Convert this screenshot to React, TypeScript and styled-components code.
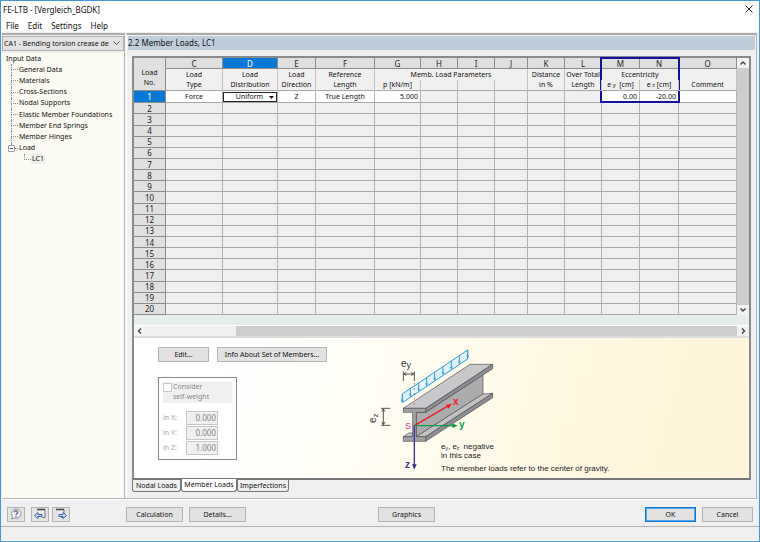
import React from 'react';
import styled, { createGlobalStyle } from 'styled-components';

const Global = createGlobalStyle`
  *, *::before, *::after { box-sizing: border-box; }
  body { margin: 0; background: #f0f0f0; }
  button, input, select { font: inherit; color: inherit; margin: 0; }
`;

const Window = styled.div`
  min-height: 100vh;
  display: flex;
  flex-direction: column;
  border: 1px solid #4597dc;
  background: #f0f0f0;
  color: #111;
  font-family: "Noto Sans", sans-serif;
  font-size: 7px;
  line-height: 11px;
`;

const TitleBar = styled.header`
  display: flex;
  justify-content: space-between;
  align-items: center;
  height: 16px;
  padding: 0 4px 0 2px;
  background: #fff;
  font-size: 8px;
`;

const CloseButton = styled.button`
  display: flex;
  align-items: center;
  padding: 2px;
  border: 0;
  background: none;
`;

const MenuBar = styled.nav`
  display: flex;
  gap: 9px;
  height: 15px;
  padding: 1px 5px 0;
  background: #fff;
  font-size: 8px;
`;

const MenuItem = styled.button`
  padding: 0;
  border: 0;
  background: none;
`;

const Main = styled.main`
  flex: 1;
  display: flex;
  gap: 1px;
  margin: 1px 2px 0 1px;
  border-bottom: 1px solid #b4b4b4;
`;

const Sidebar = styled.aside`
  display: flex;
  flex-direction: column;
  flex: 0 0 123px;
  border-top: 2px solid #a9a9a9;
  border-right: 1px solid #b4b4b4;
  background: #fcfbf3;
`;

const CaseSelectBox = styled.div`
  position: relative;
  height: 18px;
  padding: 1px 0 2px;
  background: #f0f0f0;
`;

const CaseSelect = styled.select`
  display: block;
  width: 100%;
  height: 15px;
  padding: 0 14px 0 1px;
  border: 1px solid #b0b0b0;
  border-radius: 0;
  background: #e3e3e3;
  appearance: none;
  text-overflow: clip;
`;

const CaseArrow = styled.svg`
  position: absolute;
  right: 4px;
  top: 6px;
  pointer-events: none;
`;

const Tree = styled.ul`
  display: grid;
  grid-auto-rows: 1fr;
  height: 112px;
  margin: 0;
  padding: 0;
  list-style: none;
`;

const TreeItem = styled.li<{ $level: number; $last?: boolean }>`
  position: relative;
  display: flex;
  align-items: center;
  padding-left: ${p => [3, 16, 29][p.$level]}px;

  &::before {
    content: "";
    display: ${p => (p.$level ? 'block' : 'none')};
    position: absolute;
    left: ${p => (p.$level === 2 ? 22 : 9)}px;
    top: 0;
    width: 7px;
    height: 6px;
    border-left: 1px dotted #8a8a8a;
    border-bottom: 1px dotted #8a8a8a;
  }
  &::after {
    content: "";
    display: ${p => (p.$level === 1 && !p.$last ? 'block' : 'none')};
    position: absolute;
    left: 9px;
    top: 6px;
    bottom: 0;
    border-left: 1px dotted #8a8a8a;
  }
`;

const TreeLabel = styled.button<{ $selected?: boolean }>`
  padding: 0 1px;
  border: 0;
  line-height: 10px;
  background: ${p => (p.$selected ? '#efefec' : 'none')};
`;

const Expander = styled.button`
  position: absolute;
  z-index: 1;
  left: 6px;
  top: 2px;
  width: 7px;
  height: 7px;
  padding: 0;
  border: 1px solid #9a9a9a;
  border-radius: 1px;
  background: linear-gradient(#4a5f9c, #4a5f9c) center / 3px 1px no-repeat #fff;
`;

const Content = styled.section`
  flex: 1;
  min-width: 0;
  display: flex;
  flex-direction: column;
  border-top: 2px solid #a9a9a9;
  border-right: 1px solid #b4b4b4;
  border-left: 1px solid #fff;
  padding: 1px 1px 6px;
`;

const Heading = styled.h1`
  margin: 0 0 6px;
  padding: 0;
  height: 14px;
  background: #bfcddb;
  font-size: 8px;
  line-height: 13px;
  font-weight: 400;
`;

const Frame = styled.div`
  flex: 1;
  display: flex;
  flex-direction: column;
  margin: 0 4px;
  border: 2px solid #8a8a8a;
  border-bottom: 2px solid #777;
`;

const GridArea = styled.div`
  display: flex;
  background: #f0f0f0;
`;

const Sheet = styled.table`
  flex: 1;
  min-width: 0;
  height: 257px;
  table-layout: fixed;
  border-collapse: separate;
  border-spacing: 0;
  line-height: 10px;
`;

const Col = styled.col<{ $w?: number }>`
  width: ${p => (p.$w ? p.$w + 'px' : 'auto')};
`;

const Letter = styled.th<{ $active?: boolean }>`
  height: 11px;
  padding: 0;
  border-right: 1px solid #8c8c8c;
  border-bottom: 1px solid #8c8c8c;
  background: ${p => (p.$active ? '#0a78d7' : '#dfdfdf')};
  color: ${p => (p.$active ? '#fff' : '#222')};
  font-size: 8px;
  font-weight: 400;
  line-height: 9px;
`;

const Head = styled.th<{ $open?: boolean; $end?: boolean }>`
  position: relative;
  height: 11px;
  padding: 0;
  border-right: 1px solid ${p => (p.$open ? 'transparent' : '#c4c4c4')};
  border-bottom: ${p => (p.$end ? '1px solid #a8a8a8' : '0')};
  font-weight: 400;
  white-space: nowrap;
`;

const Corner = styled.th`
  padding: 8px 0 0;
  border-right: 1px solid #8c8c8c;
  border-bottom: 1px solid #8c8c8c;
  background: #e0e0e0;
  font-weight: 400;
`;

const Highlight = styled.span`
  position: absolute;
  top: -12px;
  right: -2px;
  bottom: -23px;
  left: -2px;
  border: 2px solid #12129c;
  pointer-events: none;
`;

const RowNumber = styled.th<{ $active?: boolean }>`
  padding: 0;
  border-right: 1px solid #8c8c8c;
  border-bottom: 1px solid #8c8c8c;
  background: ${p => (p.$active ? '#0a78d7' : '#e0e0e0')};
  color: ${p => (p.$active ? '#fff' : '#222')};
  font-size: 8px;
  font-weight: 400;
  line-height: 9px;
`;

const Cell = styled.td<{ $filled?: boolean; $right?: boolean }>`
  padding: ${p => (p.$right ? '0 2px' : '0')};
  border-right: 1px solid #b4b4b4;
  border-bottom: 1px solid #a8a8a8;
  background: ${p => (p.$filled ? '#fff' : 'transparent')};
  text-align: ${p => (p.$right ? 'right' : 'center')};
  white-space: nowrap;
  line-height: 9px;
`;

const CellEditor = styled.div`
  position: relative;
  height: 10px;
`;

const CellSelect = styled.select`
  display: block;
  width: 100%;
  height: 10px;
  padding: 0 9px 0 8px;
  border: 1px solid #222;
  border-radius: 0;
  background: #fff;
  appearance: none;
  text-align: center;
  line-height: 8px;
`;

const CellArrow = styled.svg`
  position: absolute;
  right: 3px;
  top: 4px;
  pointer-events: none;
`;

const VScroll = styled.div`
  display: flex;
  flex-direction: column;
  width: 12px;
  background: #f0f0f0;
`;

const HScroll = styled.div`
  display: flex;
  height: 13px;
  border-top: 1px solid #fff;
  border-bottom: 2px solid #dcdcdc;
  background: #f0f0f0;
`;

const ScrollButton = styled.button`
  flex: none;
  display: flex;
  align-items: center;
  justify-content: center;
  width: 12px;
  height: 10px;
  padding: 0;
  border: 0;
  background: #f2f2f2;
`;

const Thumb = styled.div`
  flex: 1;
  background: #cdcdcd;
`;

const Track = styled.div`
  flex: 0 1 90px;
`;

const Strip = styled.div`
  height: 10px;
  background: #e7eded;
`;

const Details = styled.div`
  flex: 1;
  display: flex;
  gap: 38px;
  padding: 8px 0 0 24px;
  background: linear-gradient(105deg, #fff 15%, #fffdf3 42%, #fff8e3 68%, #fef5dc 85%, #fef4d9);
`;

const Controls = styled.div`
  flex: none;
  padding-top: 1px;
`;

const ButtonRow = styled.div`
  display: flex;
  gap: 8px;
`;

const Button = styled.button<{ $w: number; $primary?: boolean }>`
  display: flex;
  align-items: center;
  justify-content: center;
  width: ${p => p.$w}px;
  height: 15px;
  padding: 0;
  border: ${p => (p.$primary ? '1px solid #0a78d7' : '1px solid #b4b4b4')};
  outline: ${p => (p.$primary ? '1px solid #5aa5e4' : 'none')};
  outline-offset: -2px;
  background: #e2e2e2;
  white-space: nowrap;
`;

const WeightBox = styled.fieldset`
  width: 79px;
  min-width: 0;
  height: 83px;
  margin: 15px 0 0;
  padding: 4px;
  border: 1px solid #8a8a8a;
  background: #fff;
  color: #858585;
`;

const WeightCheck = styled.label`
  display: flex;
  gap: 1px;
  height: 21px;
  margin-bottom: 7px;
  background: #f0f0f0;
  line-height: 10px;
`;

const CheckInput = styled.input`
  flex: none;
  width: 9px;
  height: 9px;
  margin: 1px 0 0;
  appearance: none;
  border: 1px solid #c8c8c8;
  background: #fff;
`;

const Axis = styled.label`
  display: flex;
  align-items: center;
  height: 15px;
`;

const AxisName = styled.span`
  width: 23px;
  color: #a8a8a8;
`;

const AxisInput = styled.input`
  width: 32px;
  height: 14px;
  padding: 0 1px;
  border: 1px solid #c6c6c6;
  background: #f0f0f0;
  text-align: right;
  font-size: 8px;
`;

const Drawing = styled.svg`
  flex: none;
  display: block;
  font-family: "Liberation Sans", sans-serif;
`;

const Tabs = styled.div`
  display: flex;
  margin: -1px 4px 0;
  height: 13px;
`;

const Tab = styled.button<{ $active?: boolean; $w: number }>`
  width: ${p => p.$w}px;
  height: ${p => (p.$active ? 13 : 12)}px;
  margin-top: ${p => (p.$active ? 0 : 1)}px;
  padding: 0;
  border: 1px solid #777;
  border-top: 0;
  border-radius: 0 0 3px 3px;
  background: ${p => (p.$active ? '#fff' : '#f0f0f0')};
  white-space: nowrap;
  line-height: 10px;
`;

const Footer = styled.footer`
  display: flex;
  align-items: center;
  height: 28px;
  padding: 2px 6px 0;
  border-top: 1px solid #fff;
  border-bottom: 1px solid #b4b4b4;
`;

const IconGroup = styled.div`
  display: flex;
  flex: 0 0 119px;
  gap: 3px;
`;

const IconButton = styled.button<{ $spaced?: boolean }>`
  display: flex;
  align-items: center;
  justify-content: center;
  width: 18px;
  height: 15px;
  margin-right: ${p => (p.$spaced ? 3 : 0)}px;
  padding: 0;
  border: 1px solid #b4b4b4;
  background: #e4e4e4;
`;

const Actions = styled.div<{ $end?: boolean }>`
  display: flex;
  flex: ${p => (p.$end ? '0 0 auto' : '17 1 0')};
  gap: 6px;
`;

const Graphics = styled.div`
  flex: 18 1 0;
`;

const StatusBar = styled.div`
  height: 14px;
  border-bottom: 1px solid #fff;
`;

const columns: { id: string; w?: number; top?: string; bottom: React.ReactNode; value?: string; right?: boolean }[] = [
  { id: 'C', w: 57, top: 'Load', bottom: 'Type', value: 'Force' },
  { id: 'D', w: 55, top: 'Load', bottom: 'Distribution', value: 'Uniform' },
  { id: 'E', w: 38, top: 'Load', bottom: 'Direction', value: 'Z' },
  { id: 'F', w: 59, top: 'Reference', bottom: 'Length', value: 'True Length' },
  { id: 'G', w: 46, bottom: 'p [kN/m]', value: '5.000', right: true },
  { id: 'H', w: 37, bottom: '' },
  { id: 'I', w: 37, bottom: '' },
  { id: 'J', w: 33, bottom: '' },
  { id: 'K', w: 37, top: 'Distance', bottom: 'in %' },
  { id: 'L', w: 37, top: 'Over Total', bottom: 'Length' },
  { id: 'M', w: 38, bottom: <>e<small> y</small>&nbsp; [cm]</>, value: '0.00', right: true },
  { id: 'N', w: 39, bottom: <>e<small> z</small> [cm]</>, value: '-20.00', right: true },
  { id: 'O', top: '', bottom: 'Comment', value: ' ' },
];

const treeItems = ['General Data', 'Materials', 'Cross-Sections', 'Nodal Supports', 'Elastic Member Foundations', 'Member End Springs', 'Member Hinges'];

const Chevron = ({ d }: { d: string }) => (
  <svg width="8" height="8" viewBox="0 0 8 8" fill="none" stroke="#444" strokeWidth="1.4"><path d={d} /></svg>
);

function LoadSheet() {
  return (
    <Sheet>
      <colgroup>
        <Col $w={32} />
        {columns.map(c => <Col key={c.id} $w={c.w} />)}
      </colgroup>
      <thead>
        <tr>
          <Corner rowSpan={3}>Load<br />No.</Corner>
          {columns.map(c => <Letter key={c.id} $active={c.id === 'D'}>{c.id}</Letter>)}
        </tr>
        <tr>
          {columns.slice(0, 4).map(c => <Head key={c.id}>{c.top}</Head>)}
          <Head colSpan={4}>Memb. Load Parameters</Head>
          {columns.slice(8, 10).map(c => <Head key={c.id} $open={c.id === 'L'}>{c.top}</Head>)}
          <Head colSpan={2}>Eccentricity<Highlight /></Head>
          <Head />
        </tr>
        <tr>
          {columns.map(c => <Head key={c.id} $end>{c.bottom}</Head>)}
        </tr>
      </thead>
      <tbody>
        {Array.from({ length: 20 }, (_, i) => (
          <tr key={i}>
            <RowNumber $active={i === 0}>{i + 1}</RowNumber>
            {columns.map(c => {
              if (i > 0 || !c.value) return <Cell key={c.id} />;
              if (c.id === 'D') {
                return (
                  <Cell key={c.id} $filled>
                    <CellEditor>
                      <CellSelect aria-label="Load distribution" defaultValue={c.value}><option>{c.value}</option></CellSelect>
                      <CellArrow width="5" height="3" viewBox="0 0 5 3"><path d="M0 0h5L2.5 3z" fill="#111" /></CellArrow>
                    </CellEditor>
                  </Cell>
                );
              }
              return <Cell key={c.id} $filled $right={c.right}>{c.value}</Cell>;
            })}
          </tr>
        ))}
      </tbody>
    </Sheet>
  );
}

const loadX = [127, 151, 176, 200, 224, 249, 274, 298, 323];

function BeamDrawing() {
  return (
    <Drawing width="250" height="130" viewBox="365 346 250 130" role="img" aria-label="Member with eccentric load">
      <g transform="translate(360 340) scale(0.33333)" strokeLinejoin="round">
        <g stroke="#4c4c4e" strokeWidth="2">
          <path d="M169 217H197L369 104V163L169 290z" fill="#acacaf" />
          <path d="M169 290L369 162L398 160L197 290z" fill="#c3c3c6" />
          <path d="M197 290L398 160V173L197 304z" fill="#8d8d91" />
          <path d="M130 290L146 279H158V290z" fill="#c3c3c6" />
          <path d="M130 205L330 73H398L197 205z" fill="#c9c9cc" />
          <path d="M197 205L398 73V86L197 217z" fill="#8d8d91" />
          <path d="M130 205H197V217H169V290H197V304H130V290H158V217H130z" fill="#a2a2a6" />
        </g>
        <g stroke="#2b9bd8" strokeWidth="3" fill="none">
          <path d="M127 162L323 30V57L127 188z" fill="#e4f2fa" />
          {loadX.map(x => {
            const top = 162 - ((x - 127) * 132) / 196;
            return (
              <g key={x}>
                <path d={`M${x} ${top}v22`} />
                <path d={`M${x - 4} ${top + 17}h8l-4 9z`} fill="#2b9bd8" stroke="none" />
              </g>
            );
          })}
        </g>
        <g stroke="#333" strokeWidth="2.5" fill="none">
          <path d="M130 94v29M163 94v29M132 102h29m-22 -5l-7 5l7 5m15 -10l7 5l-7 5" />
          <path d="M63 205h28M63 256h28M70 207v47m-5 -39l5 -8l5 8m-10 31l5 8l5 -8" />
          <path d="M163 130v70" strokeDasharray="3 12" />
        </g>
        <path d="M163 257L262 199" stroke="#ed1c24" strokeWidth="4" />
        <path d="M276 191L258 194L265 206z" fill="#ed1c24" />
        <path d="M163 257H280" stroke="#0e9b48" strokeWidth="4" />
        <path d="M293 257L277 250V264z" fill="#0e9b48" />
        <path d="M163 257V376" stroke="#3a329a" strokeWidth="4" />
        <path d="M163 389L156 373H170z" fill="#3a329a" />
      </g>
      <text x="401" y="367" fontSize="10" fill="#333">e<tspan fontSize="9" dy="1">y</tspan></text>
      <text transform="translate(376 423) rotate(-90)" fontSize="10" fill="#333">e<tspan fontSize="8" dy="2">z</tspan></text>
      <text x="405" y="429" fontSize="9" fill="#cc3399">S</text>
      <text x="453" y="405" fontSize="10" fontWeight="700" fill="#ed1c24">x</text>
      <text x="459" y="428" fontSize="10" fontWeight="700" fill="#0e9b48">y</text>
      <text x="405" y="468" fontSize="10" fontWeight="700" fill="#3a329a">z</text>
      <g fontSize="8" fill="#222">
        <text x="441" y="449">e<tspan fontSize="5" dy="1">y</tspan><tspan dy="-1">, e</tspan><tspan fontSize="5" dy="1">z</tspan><tspan dy="-1" dx="2"> negative</tspan></text>
        <text x="441" y="458">in this case</text>
        <text x="441" y="471">The member loads refer to the center of gravity.</text>
      </g>
    </Drawing>
  );
}

const PageArrowIcon = ({ back }: { back?: boolean }) => (
  <svg width="12" height="12" viewBox="0 0 12 12">
    <path d={back ? 'M3 1.5h8v8h-3' : 'M1 1.5h8v8h-3'} fill="#eee" stroke="#777" />
    <path d={back ? 'M3 1.5h8' : 'M1 1.5h8'} stroke="#444a5c" strokeWidth="1.6" />
    <path d={back ? 'M0.5 7.5L4 4.5V6.5H8V8.5H4V10.5z' : 'M11.5 7.5L8 4.5V6.5H4V8.5H8V10.5z'} fill="#c9dcff" stroke="#3556a8" strokeWidth="0.9" />
  </svg>
);

export default function App() {
  return (
    <>
      <Global />
      <Window>
        <TitleBar>
          <span>FE-LTB - [Vergleich_BGDK]</span>
          <CloseButton aria-label="Close">
            <svg width="8" height="8" viewBox="0 0 8 8" stroke="#222" strokeWidth="1"><path d="M0.5 0.5L7.5 7.5M7.5 0.5L0.5 7.5" /></svg>
          </CloseButton>
        </TitleBar>
        <MenuBar>
          {['File', 'Edit', 'Settings', 'Help'].map(m => <MenuItem key={m}>{m}</MenuItem>)}
        </MenuBar>
        <Main>
          <Sidebar>
            <CaseSelectBox>
              <CaseSelect aria-label="Design case" defaultValue="1">
                <option value="1">CA1 - Bending torsion crease design</option>
              </CaseSelect>
              <CaseArrow width="7" height="5" viewBox="0 0 7 5" fill="none" stroke="#555"><path d="M0.5 0.5L3.5 3.5L6.5 0.5" /></CaseArrow>
            </CaseSelectBox>
            <Tree>
              <TreeItem $level={0}><TreeLabel>Input Data</TreeLabel></TreeItem>
              {treeItems.map(t => <TreeItem key={t} $level={1}><TreeLabel>{t}</TreeLabel></TreeItem>)}
              <TreeItem $level={1} $last>
                <Expander aria-label="Collapse Load" />
                <TreeLabel>Load</TreeLabel>
              </TreeItem>
              <TreeItem $level={2}><TreeLabel $selected>LC1</TreeLabel></TreeItem>
            </Tree>
          </Sidebar>
          <Content>
            <Heading>2.2 Member Loads, LC1</Heading>
            <Frame>
              <GridArea>
                <LoadSheet />
                <VScroll>
                  <ScrollButton aria-label="Scroll up"><Chevron d="M1.5 5.5L4 3L6.5 5.5" /></ScrollButton>
                  <Thumb />
                  <ScrollButton aria-label="Scroll down"><Chevron d="M1.5 2.5L4 5L6.5 2.5" /></ScrollButton>
                </VScroll>
              </GridArea>
              <Strip />
              <HScroll>
                <ScrollButton aria-label="Scroll left"><Chevron d="M5 1.5L2.5 4L5 6.5" /></ScrollButton>
                <Track />
                <Thumb />
                <ScrollButton aria-label="Scroll right"><Chevron d="M3 1.5L5.5 4L3 6.5" /></ScrollButton>
              </HScroll>
              <Details>
                <Controls>
                  <ButtonRow>
                    <Button $w={51}>Edit...</Button>
                    <Button $w={110}>Info About Set of Members...</Button>
                  </ButtonRow>
                  <WeightBox disabled>
                    <WeightCheck>
                      <CheckInput type="checkbox" />
                      <span>Consider<br />self-weight</span>
                    </WeightCheck>
                    {[['X', '0.000'], ['Y', '0.000'], ['Z', '1.000']].map(([axis, value]) => (
                      <Axis key={axis}>
                        <AxisName>in {axis}:</AxisName>
                        <AxisInput defaultValue={value} />
                      </Axis>
                    ))}
                  </WeightBox>
                </Controls>
                <BeamDrawing />
              </Details>
            </Frame>
            <Tabs>
              <Tab $w={49}>Nodal Loads</Tab>
              <Tab $w={56} $active>Member Loads</Tab>
              <Tab $w={52}>Imperfections</Tab>
            </Tabs>
          </Content>
        </Main>
        <Footer>
          <IconGroup>
            <IconButton aria-label="Help" $spaced>
              <svg width="12" height="12" viewBox="0 0 12 12">
                <path d="M6 1a5 4.700 0 1 1 -2 9l-2.500 1l1 -2.500A5 4.700 0 0 1 6 1z" fill="#f4f4f4" stroke="#888" strokeWidth="0.9" />
                <path d="M4.300 4.300C4.300 2.300 7.900 2.300 7.700 4.300C7.600 5.500 6 5.500 6 7M6 8v1.200" fill="none" stroke="#4a5f9c" strokeWidth="1.3" />
              </svg>
            </IconButton>
            <IconButton aria-label="Previous page"><PageArrowIcon back /></IconButton>
            <IconButton aria-label="Next page"><PageArrowIcon /></IconButton>
          </IconGroup>
          <Actions>
            <Button $w={57}>Calculation</Button>
            <Button $w={57}>Details...</Button>
          </Actions>
          <Graphics><Button $w={57}>Graphics</Button></Graphics>
          <Actions $end>
            <Button $w={51} $primary>OK</Button>
            <Button $w={51}>Cancel</Button>
          </Actions>
        </Footer>
        <StatusBar />
      </Window>
    </>
  );
}
